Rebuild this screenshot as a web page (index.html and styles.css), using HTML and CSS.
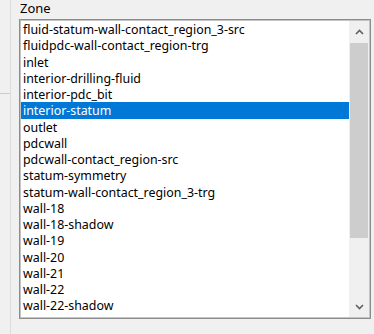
FILE: index.html
```html
<!DOCTYPE html>
<html>
<head>
<meta charset="utf-8">
<link rel="stylesheet" href="styles.css">
</head>
<body>
<div class="page">
  <div class="strip">
    <div class="strip-gap"></div>
    <div class="strip-tick"></div>
  </div>
  <div class="panel">
    <div class="label">Zone</div>
    <div class="listbox">
      <ul class="items">
        <li>fluid-statum-wall-contact_region_3-src</li>
        <li>fluidpdc-wall-contact_region-trg</li>
        <li>inlet</li>
        <li>interior-drilling-fluid</li>
        <li>interior-pdc_bit</li>
        <li class="selected">interior-statum</li>
        <li>outlet</li>
        <li>pdcwall</li>
        <li>pdcwall-contact_region-src</li>
        <li>statum-symmetry</li>
        <li>statum-wall-contact_region_3-trg</li>
        <li>wall-18</li>
        <li>wall-18-shadow</li>
        <li>wall-19</li>
        <li>wall-20</li>
        <li>wall-21</li>
        <li>wall-22</li>
        <li>wall-22-shadow</li>
      </ul>
      <div class="scrollbar">
        <div class="sb-btn">
          <svg width="9" height="6" viewBox="0 0 9 6"><path d="M1 5 L4.5 1.5 L8 5" fill="none" stroke="#606060" stroke-width="1.6"/></svg>
        </div>
        <div class="sb-track">
          <div class="sb-thumb"></div>
        </div>
        <div class="sb-btn">
          <svg width="9" height="6" viewBox="0 0 9 6"><path d="M1 1 L4.5 4.5 L8 1" fill="none" stroke="#606060" stroke-width="1.6"/></svg>
        </div>
      </div>
    </div>
  </div>
</div>
</body>
</html>
```
FILE: styles.css
```css
html, body {
  margin: 0;
  padding: 0;
  background: #f0f0f0;
}
.page {
  display: flex;
  width: 374px;
  height: 334px;
  overflow: hidden;
  font-family: "Noto Sans", "Open Sans", sans-serif;
  color: #000;
}
.strip {
  width: 10px;
  border-right: 1px solid #dcdcdc;
  display: flex;
  flex-direction: column;
}
.strip-gap {
  height: 93px;
}
.strip-tick {
  height: 1px;
  background: #cccccc;
}
.panel {
  padding-left: 8px;
  display: flex;
  flex-direction: column;
}
.label {
  font-size: 13px;
  line-height: 17px;
  height: 19px;
  padding-left: 1px;
}
.listbox {
  width: 348px;
  height: 296px;
  border: 1px solid #8c8c8c;
  box-shadow: inset 0 0 0 1px #c4c4c4;
  background: #fff;
  display: flex;
  padding: 1px;
}
.items {
  list-style: none;
  margin: 0;
  padding: 0;
  flex: 1;
  font-size: 12.4px;
}
.items li {
  height: 16.25px;
  line-height: 17px;
  padding-left: 2px;
  white-space: nowrap;
}
.items li.selected {
  background: #0078d7;
  color: #fff;
}
.scrollbar {
  width: 20px;
  background: #f0f0f0;
  display: flex;
  flex-direction: column;
}
.sb-btn {
  height: 21px;
  display: flex;
  align-items: center;
  justify-content: center;
}
.sb-track {
  flex: 1;
  display: flex;
  flex-direction: column;
  padding: 1px 1px 0 1px;
}
.sb-thumb {
  height: 195px;
  background: #cdcdcd;
}
```
